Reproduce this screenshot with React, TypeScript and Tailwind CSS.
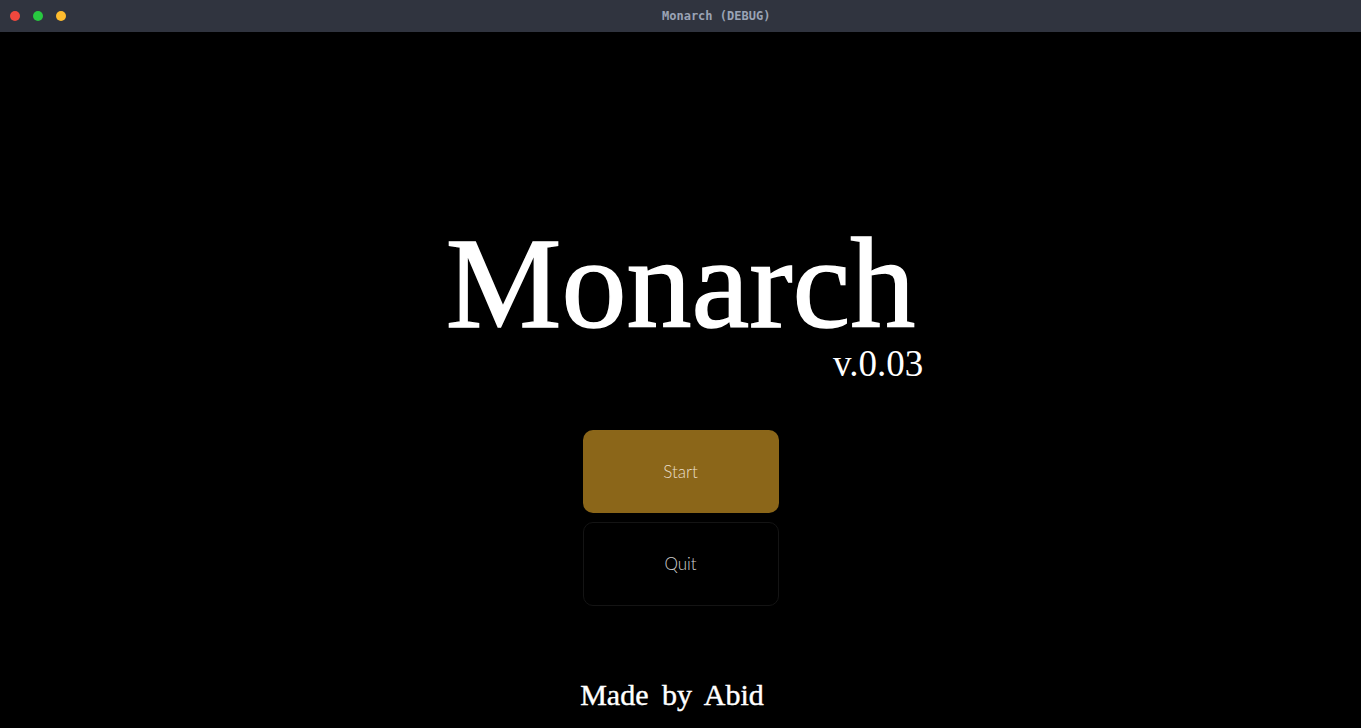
export default function App() {
  return (
    <div className="flex h-[728px] w-[1361px] flex-col overflow-hidden bg-black">
      {/* window chrome */}
      <div className="flex h-8 shrink-0 items-center bg-[#30343f]">
        <div className="flex items-center gap-[13px] pl-[10px]">
          <span className="h-[10px] w-[10px] rounded-full bg-[#f0483e]" />
          <span className="h-[10px] w-[10px] rounded-full bg-[#28c840]" />
          <span className="h-[10px] w-[10px] rounded-full bg-[#febc2e]" />
        </div>
        <span className="ml-[596px] font-['DejaVu_Sans_Mono',monospace] text-[12px] font-bold text-[#9aa3b5]">
          Monarch (DEBUG)
        </span>
      </div>

      <main className="flex flex-1 flex-col items-center">
        <div className="mt-[199px] flex flex-col items-end">
          <h1 className="font-['Liberation_Serif',serif] text-[130px] leading-[0.8] text-white [-webkit-text-stroke:1.5px_white]">
            Monarch
          </h1>
          <span className="-mr-2 mt-[10px] font-['Liberation_Serif',serif] text-[37px] leading-none text-white">
            v.0.03
          </span>
        </div>

        <div className="mt-[48px] flex w-[196px] flex-col gap-[9px] font-['Lato',sans-serif] text-[17px] font-light">
          <button className="flex h-[83px] items-center justify-center rounded-[10px] bg-[#8b6619] text-[#eadfca]">
            Start
          </button>
          <button className="flex h-[84px] items-center justify-center rounded-[10px] border border-[#141414] bg-black text-[#cfcfcf]">
            Quit
          </button>
        </div>

        <div className="mt-auto mb-[18px] mr-[17px] font-['Liberation_Serif',serif] text-[30px] leading-none text-white [-webkit-text-stroke:0.4px_white] [word-spacing:6px]">
          Made by Abid
        </div>
      </main>
    </div>
  );
}
